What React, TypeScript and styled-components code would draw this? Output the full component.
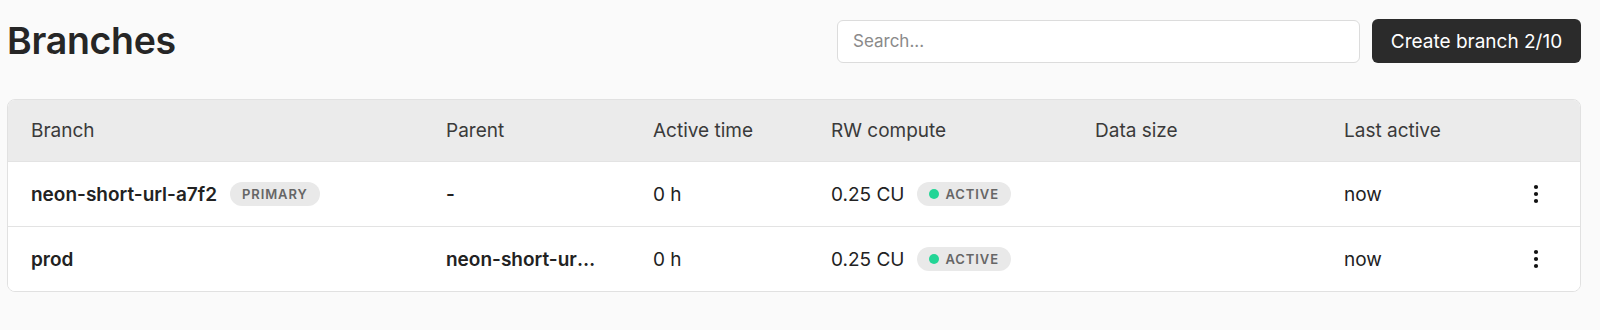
import React from 'react';
import styled, { createGlobalStyle } from 'styled-components';

const GlobalStyle = createGlobalStyle`
  html, body {
    margin: 0;
    padding: 0;
    background: #fafafa;
    font-family: Inter, "Noto Sans", Arial, sans-serif;
    color: #222;
  }
`;

const Page = styled.div`
  padding: 19px 19px 0 7px;
`;

const TopBar = styled.div`
  display: flex;
  align-items: center;
  justify-content: space-between;
`;

const Title = styled.h1`
  margin: 0;
  font-size: 37.5px;
  line-height: 44px;
  font-weight: 600;
  color: #262626;
  letter-spacing: -0.3px;
`;

const Actions = styled.div`
  display: flex;
  align-items: center;
  gap: 12px;
`;

const SearchInput = styled.input`
  box-sizing: border-box;
  width: 523px;
  height: 43px;
  padding: 0 15px;
  border: 1px solid #dcdcdc;
  border-radius: 6px;
  background: #fff;
  font-family: inherit;
  font-size: 17px;
  color: #222;
  outline: none;

  &::placeholder {
    color: #8a8a8a;
  }
`;

const PrimaryButton = styled.button`
  box-sizing: border-box;
  height: 44px;
  width: 209px;
  border: none;
  border-radius: 6px;
  background: #2b2b2b;
  color: #fff;
  font-family: inherit;
  font-size: 19px;
  font-weight: 400;
  cursor: pointer;
`;

const Card = styled.div`
  margin-top: 36px;
  border: 1px solid #e1e1e1;
  border-radius: 8px;
  overflow: hidden;
  background: #fff;
`;

const Row = styled.div<{ $header?: boolean }>`
  display: grid;
  grid-template-columns: 415px 207px 178px 264px 249px 1fr 42px;
  align-items: center;
  height: ${p => (p.$header ? '61px' : '64px')};
  padding: 0 23px;
  background: ${p => (p.$header ? '#ebebeb' : '#fff')};
  border-top: ${p => (p.$header ? 'none' : '1px solid #e3e3e3')};
  font-size: 19px;
  color: ${p => (p.$header ? '#3a3a3a' : '#222')};
`;

const Cell = styled.div<{ $bold?: boolean }>`
  display: flex;
  align-items: center;
  gap: 13px;
  min-width: 0;
  font-weight: ${p => (p.$bold ? 600 : 400)};
`;

const Truncate = styled.span`
  max-width: 154px;
  overflow: hidden;
  white-space: nowrap;
  text-overflow: ellipsis;
`;

const Badge = styled.span`
  display: inline-flex;
  align-items: center;
  gap: 6px;
  height: 24px;
  padding: 0 12px;
  border-radius: 12px;
  background: #e9e9e9;
  color: #666;
  font-size: 13px;
  font-weight: 600;
  letter-spacing: 0.9px;
  text-transform: uppercase;
`;

const Dot = styled.span`
  width: 10px;
  height: 10px;
  border-radius: 50%;
  background: #23d596;
`;

const MenuButton = styled.button`
  display: flex;
  justify-content: center;
  align-items: center;
  width: 100%;
  height: 32px;
  padding: 0;
  border: none;
  background: none;
  cursor: pointer;
`;

const MoreIcon = () => (
  <svg width="6" height="20" viewBox="0 0 6 20">
    <circle cx="3" cy="3" r="2.1" fill="#111" />
    <circle cx="3" cy="10" r="2.1" fill="#111" />
    <circle cx="3" cy="17" r="2.1" fill="#111" />
  </svg>
);

type Branch = {
  name: string;
  primary?: boolean;
  parent: string;
  activeTime: string;
  compute: string;
  dataSize: string;
  lastActive: string;
};

const branches: Branch[] = [
  { name: 'neon-short-url-a7f2', primary: true, parent: '-', activeTime: '0 h', compute: '0.25 CU', dataSize: '', lastActive: 'now' },
  { name: 'prod', parent: 'neon-short-url-a7f2', activeTime: '0 h', compute: '0.25 CU', dataSize: '', lastActive: 'now' },
];

export default function App() {
  return (
    <Page>
      <GlobalStyle />
      <TopBar>
        <Title>Branches</Title>
        <Actions>
          <SearchInput placeholder="Search..." />
          <PrimaryButton>Create branch 2/10</PrimaryButton>
        </Actions>
      </TopBar>
      <Card>
        <Row $header>
          <Cell>Branch</Cell>
          <Cell>Parent</Cell>
          <Cell>Active time</Cell>
          <Cell>RW compute</Cell>
          <Cell>Data size</Cell>
          <Cell>Last active</Cell>
          <Cell />
        </Row>
        {branches.map(b => (
          <Row key={b.name}>
            <Cell $bold>
              {b.name}
              {b.primary && <Badge>Primary</Badge>}
            </Cell>
            <Cell $bold>
              <Truncate>{b.parent}</Truncate>
            </Cell>
            <Cell>{b.activeTime}</Cell>
            <Cell>
              {b.compute}
              <Badge>
                <Dot />
                Active
              </Badge>
            </Cell>
            <Cell>{b.dataSize}</Cell>
            <Cell>{b.lastActive}</Cell>
            <Cell>
              <MenuButton title="More">
                <MoreIcon />
              </MenuButton>
            </Cell>
          </Row>
        ))}
      </Card>
    </Page>
  );
}
